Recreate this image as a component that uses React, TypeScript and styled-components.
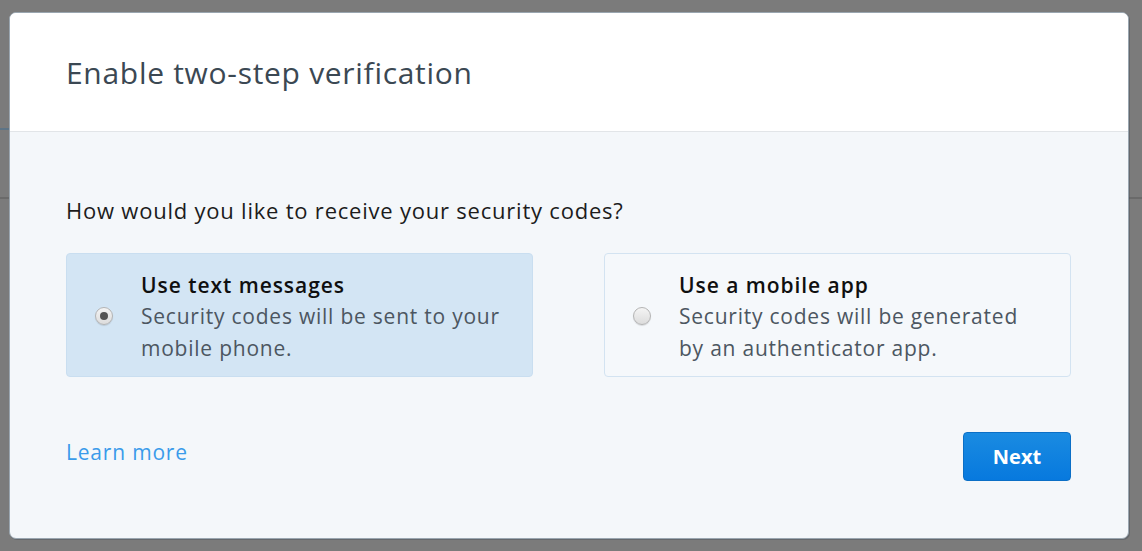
import React from "react";
import styled, { createGlobalStyle } from "styled-components";

const Global = createGlobalStyle`
  html, body { margin: 0; padding: 0; }
  body {
    background: #7b7b7b;
    font-family: "Open Sans", "Noto Sans", sans-serif;
    -webkit-font-smoothing: antialiased;
  }
  #root { height: 551px; }
`;

const Backdrop = styled.div`
  position: relative;
  height: 551px;
  box-sizing: border-box;
  padding: 12px 13px 12px 9px;
  display: flex;
  background:
    linear-gradient(#6a6a6a, #6a6a6a) 0 197px / 100% 2px no-repeat,
    linear-gradient(#5d7486, #5d7486) 0 128px / 20px 2px no-repeat,
    #7b7b7b;
`;

const Dialog = styled.div`
  flex: 1;
  display: flex;
  flex-direction: column;
  border: 1px solid #9aa6b0;
  border-radius: 7px;
  overflow: hidden;
  background: #f4f7fa;
  box-shadow: 1px 1px 0 rgba(60, 70, 80, 0.35);
`;

const Header = styled.div`
  height: 119px;
  flex: none;
  background: #ffffff;
  border-bottom: 1px solid #e2e5e8;
  display: flex;
  align-items: center;
  padding: 0 56px;
  box-sizing: border-box;
`;

const Title = styled.h1`
  margin: 0;
  font-size: 30px;
  font-weight: 400;
  color: #3b4853;
  letter-spacing: 0.7px;
`;

const Body = styled.div`
  flex: 1;
  padding: 64px 57px 0 56px;
  display: flex;
  flex-direction: column;
`;

const Question = styled.p`
  margin: 0 0 29px 0;
  font-size: 22px;
  line-height: 28px;
  letter-spacing: 0.78px;
  color: #1c1c1c;
`;

const Options = styled.div`
  display: grid;
  grid-template-columns: 1fr 1fr;
  gap: 71px;
`;

const Card = styled.label<{ $selected?: boolean }>`
  display: flex;
  align-items: center;
  gap: 28px;
  height: 124px;
  box-sizing: border-box;
  padding: 0 16px 0 28px;
  border-radius: 4px;
  border: 1px solid ${(p) => (p.$selected ? "#c9def0" : "#d3e3f1")};
  background: ${(p) => (p.$selected ? "#d3e5f4" : "#f5f8fb")};
  cursor: pointer;
`;

const Radio = styled.span<{ $checked?: boolean }>`
  flex: none;
  width: 18px;
  height: 18px;
  border-radius: 50%;
  box-sizing: border-box;
  border: 1px solid #b4b4b4;
  background: linear-gradient(#f4f4f4, #dcdcdc);
  box-shadow: 0 1px 1px rgba(0, 0, 0, 0.12);
  display: flex;
  align-items: center;
  justify-content: center;
  margin-top: 1px;
  &::after {
    content: "";
    width: 8px;
    height: 8px;
    border-radius: 50%;
    background: #555;
    display: ${(p) => (p.$checked ? "block" : "none")};
  }
`;

const OptionText = styled.div`
  display: flex;
  flex-direction: column;
  font-size: 21px;
  line-height: 31.5px;
  letter-spacing: 0.77px;
  white-space: nowrap;
  margin-top: 4px;
`;

const OptionTitle = styled.span`
  font-weight: 600;
  color: #0f0f0f;
  letter-spacing: 0.95px;
`;

const OptionDesc = styled.span`
  color: #4c5661;
`;

const Footer = styled.div`
  display: flex;
  justify-content: space-between;
  align-items: center;
  margin-top: 55px;
`;

const LearnMore = styled.a`
  font-size: 21px;
  letter-spacing: 0.8px;
  color: #3a9bea;
  text-decoration: none;
  margin-bottom: 10px;
`;

const NextButton = styled.button`
  width: 108px;
  height: 49px;
  border-radius: 4px;
  border: 1px solid #0b6fc6;
  background: linear-gradient(#1a8be1, #0779de);
  color: #fff;
  font-family: "Open Sans", "Noto Sans", sans-serif;
  font-size: 20px;
  font-weight: 700;
  cursor: pointer;
`;

export default function App() {
  return (
    <>
      <Global />
      <Backdrop>
        <Dialog>
          <Header>
            <Title>Enable two-step verification</Title>
          </Header>
          <Body>
            <Question>How would you like to receive your security codes?</Question>
            <Options>
              <Card $selected>
                <Radio $checked />
                <OptionText>
                  <OptionTitle>Use text messages</OptionTitle>
                  <OptionDesc>Security codes will be sent to your</OptionDesc>
                  <OptionDesc>mobile phone.</OptionDesc>
                </OptionText>
              </Card>
              <Card>
                <Radio />
                <OptionText>
                  <OptionTitle>Use a mobile app</OptionTitle>
                  <OptionDesc>Security codes will be generated</OptionDesc>
                  <OptionDesc>by an authenticator app.</OptionDesc>
                </OptionText>
              </Card>
            </Options>
            <Footer>
              <LearnMore href="#">Learn more</LearnMore>
              <NextButton>Next</NextButton>
            </Footer>
          </Body>
        </Dialog>
      </Backdrop>
    </>
  );
}
